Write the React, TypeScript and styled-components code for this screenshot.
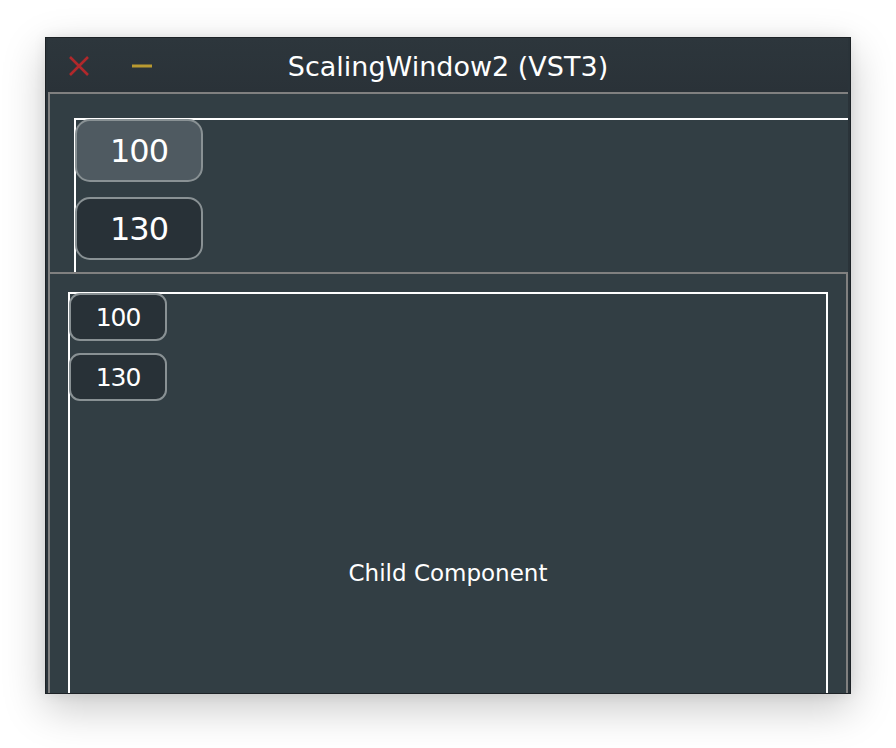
import * as React from 'react'
import styled, { createGlobalStyle } from 'styled-components'

const GlobalStyle = createGlobalStyle`
    html, body {
        margin: 0;
        padding: 0;
        background: #ffffff;
        font-family: "DejaVu Sans", Verdana, sans-serif;
    }
    * { box-sizing: border-box; }
`

const Page = styled.div`
    width: 896px;
    height: 748px;
    padding: 37px 0 0 45px;
    overflow: hidden;
`

const Window = styled.div`
    width: 806px;
    height: 657px;
    display: flex;
    flex-direction: column;
    padding: 0 2px;
    background: #2a3339;
    border: 1px solid #1d2226;
    box-shadow: 0 14px 40px rgba(0, 0, 0, 0.22), 0 0 12px rgba(0, 0, 0, 0.08);
`

const TitleBar = styled.div`
    height: 54px;
    flex: none;
    display: grid;
    grid-template-columns: 1fr auto 1fr;
    align-items: center;
    background: linear-gradient(#2d363c, #2a3238);
`

const TitleButtons = styled.div`
    display: flex;
    align-items: center;
    gap: 42px;
    padding-left: 20px;
    padding-top: 2px;
`

const Title = styled.div`
    color: #ffffff;
    font-size: 27px;
    line-height: 1;
    padding-top: 2px;
    white-space: nowrap;
`

const Editor = styled.div`
    flex: 1;
    min-height: 0;
    display: flex;
    flex-direction: column;
    overflow: hidden;
    background: #323e44;
    border-top: 2px solid #808080;
    border-left: 2px solid #808080;
`

const ScaledArea = styled.div`
    height: 178px;
    flex: none;
    padding: 24px 0 0 24px;
    overflow: hidden;
`

const ScaledBox = styled.div`
    width: 1000px;
    height: 200px;
    border-top: 2px solid #ffffff;
    border-left: 2px solid #ffffff;
`

const ButtonColumn = styled.div<{ gap: number }>`
    display: flex;
    flex-direction: column;
    align-items: flex-start;
    gap: ${props => props.gap}px;
    margin: -1px 0 0 -1px;
`

const ScaleButton = styled.div<{ big?: boolean, lit?: boolean }>`
    width: ${props => props.big ? 128 : 98}px;
    height: ${props => props.big ? 63 : 48}px;
    display: flex;
    align-items: center;
    justify-content: center;
    border: 2px solid #899194;
    border-radius: ${props => props.big ? 15 : 11}px;
    background: ${props => props.lit ? '#4f5a61' : '#283137'};
    color: #ffffff;
    font-size: ${props => props.big ? 32 : 25}px;
    letter-spacing: -1px;
    line-height: 1;
`

const ChildPanel = styled.div`
    flex: 1;
    min-height: 0;
    padding: 18px 18px 0 18px;
    border-top: 2px solid #808080;
    border-right: 2px solid #808080;
    overflow: hidden;
`

const ChildBox = styled.div`
    height: 560px;
    display: grid;
    border: 2px solid #ffffff;
    border-bottom: none;

    & > * {
        grid-area: 1 / 1;
    }
`

const ChildLabel = styled.div`
    align-self: center;
    justify-self: center;
    color: #ffffff;
    font-size: 23px;
    line-height: 1;
`

const CloseIcon = () => (
    <svg width="22" height="22" viewBox="0 0 22 22">
        <path d="M2 2 L20 20 M20 2 L2 20" stroke="#b0282b" strokeWidth="2.6" strokeLinecap="butt" fill="none" />
    </svg>
)

const MinimiseIcon = () => (
    <svg width="20" height="22" viewBox="0 0 20 22">
        <rect x="0" y="9.5" width="20" height="3" fill="#b99a31" />
    </svg>
)

const scales = [100, 130]

export default function App()
{
    return (
        <Page>
            <GlobalStyle />
            <Window>
                <TitleBar>
                    <TitleButtons>
                        <CloseIcon />
                        <MinimiseIcon />
                    </TitleButtons>
                    <Title>ScalingWindow2 (VST3)</Title>
                    <div />
                </TitleBar>
                <Editor>
                    <ScaledArea>
                        <ScaledBox>
                            <ButtonColumn gap={15}>
                                {scales.map((s, i) => (
                                    <ScaleButton key={s} big lit={i == 0}>{s}</ScaleButton>
                                ))}
                            </ButtonColumn>
                        </ScaledBox>
                    </ScaledArea>
                    <ChildPanel>
                        <ChildBox>
                            <ButtonColumn gap={12}>
                                {scales.map(s => (
                                    <ScaleButton key={s}>{s}</ScaleButton>
                                ))}
                            </ButtonColumn>
                            <ChildLabel>Child Component</ChildLabel>
                        </ChildBox>
                    </ChildPanel>
                </Editor>
            </Window>
        </Page>
    )
}
